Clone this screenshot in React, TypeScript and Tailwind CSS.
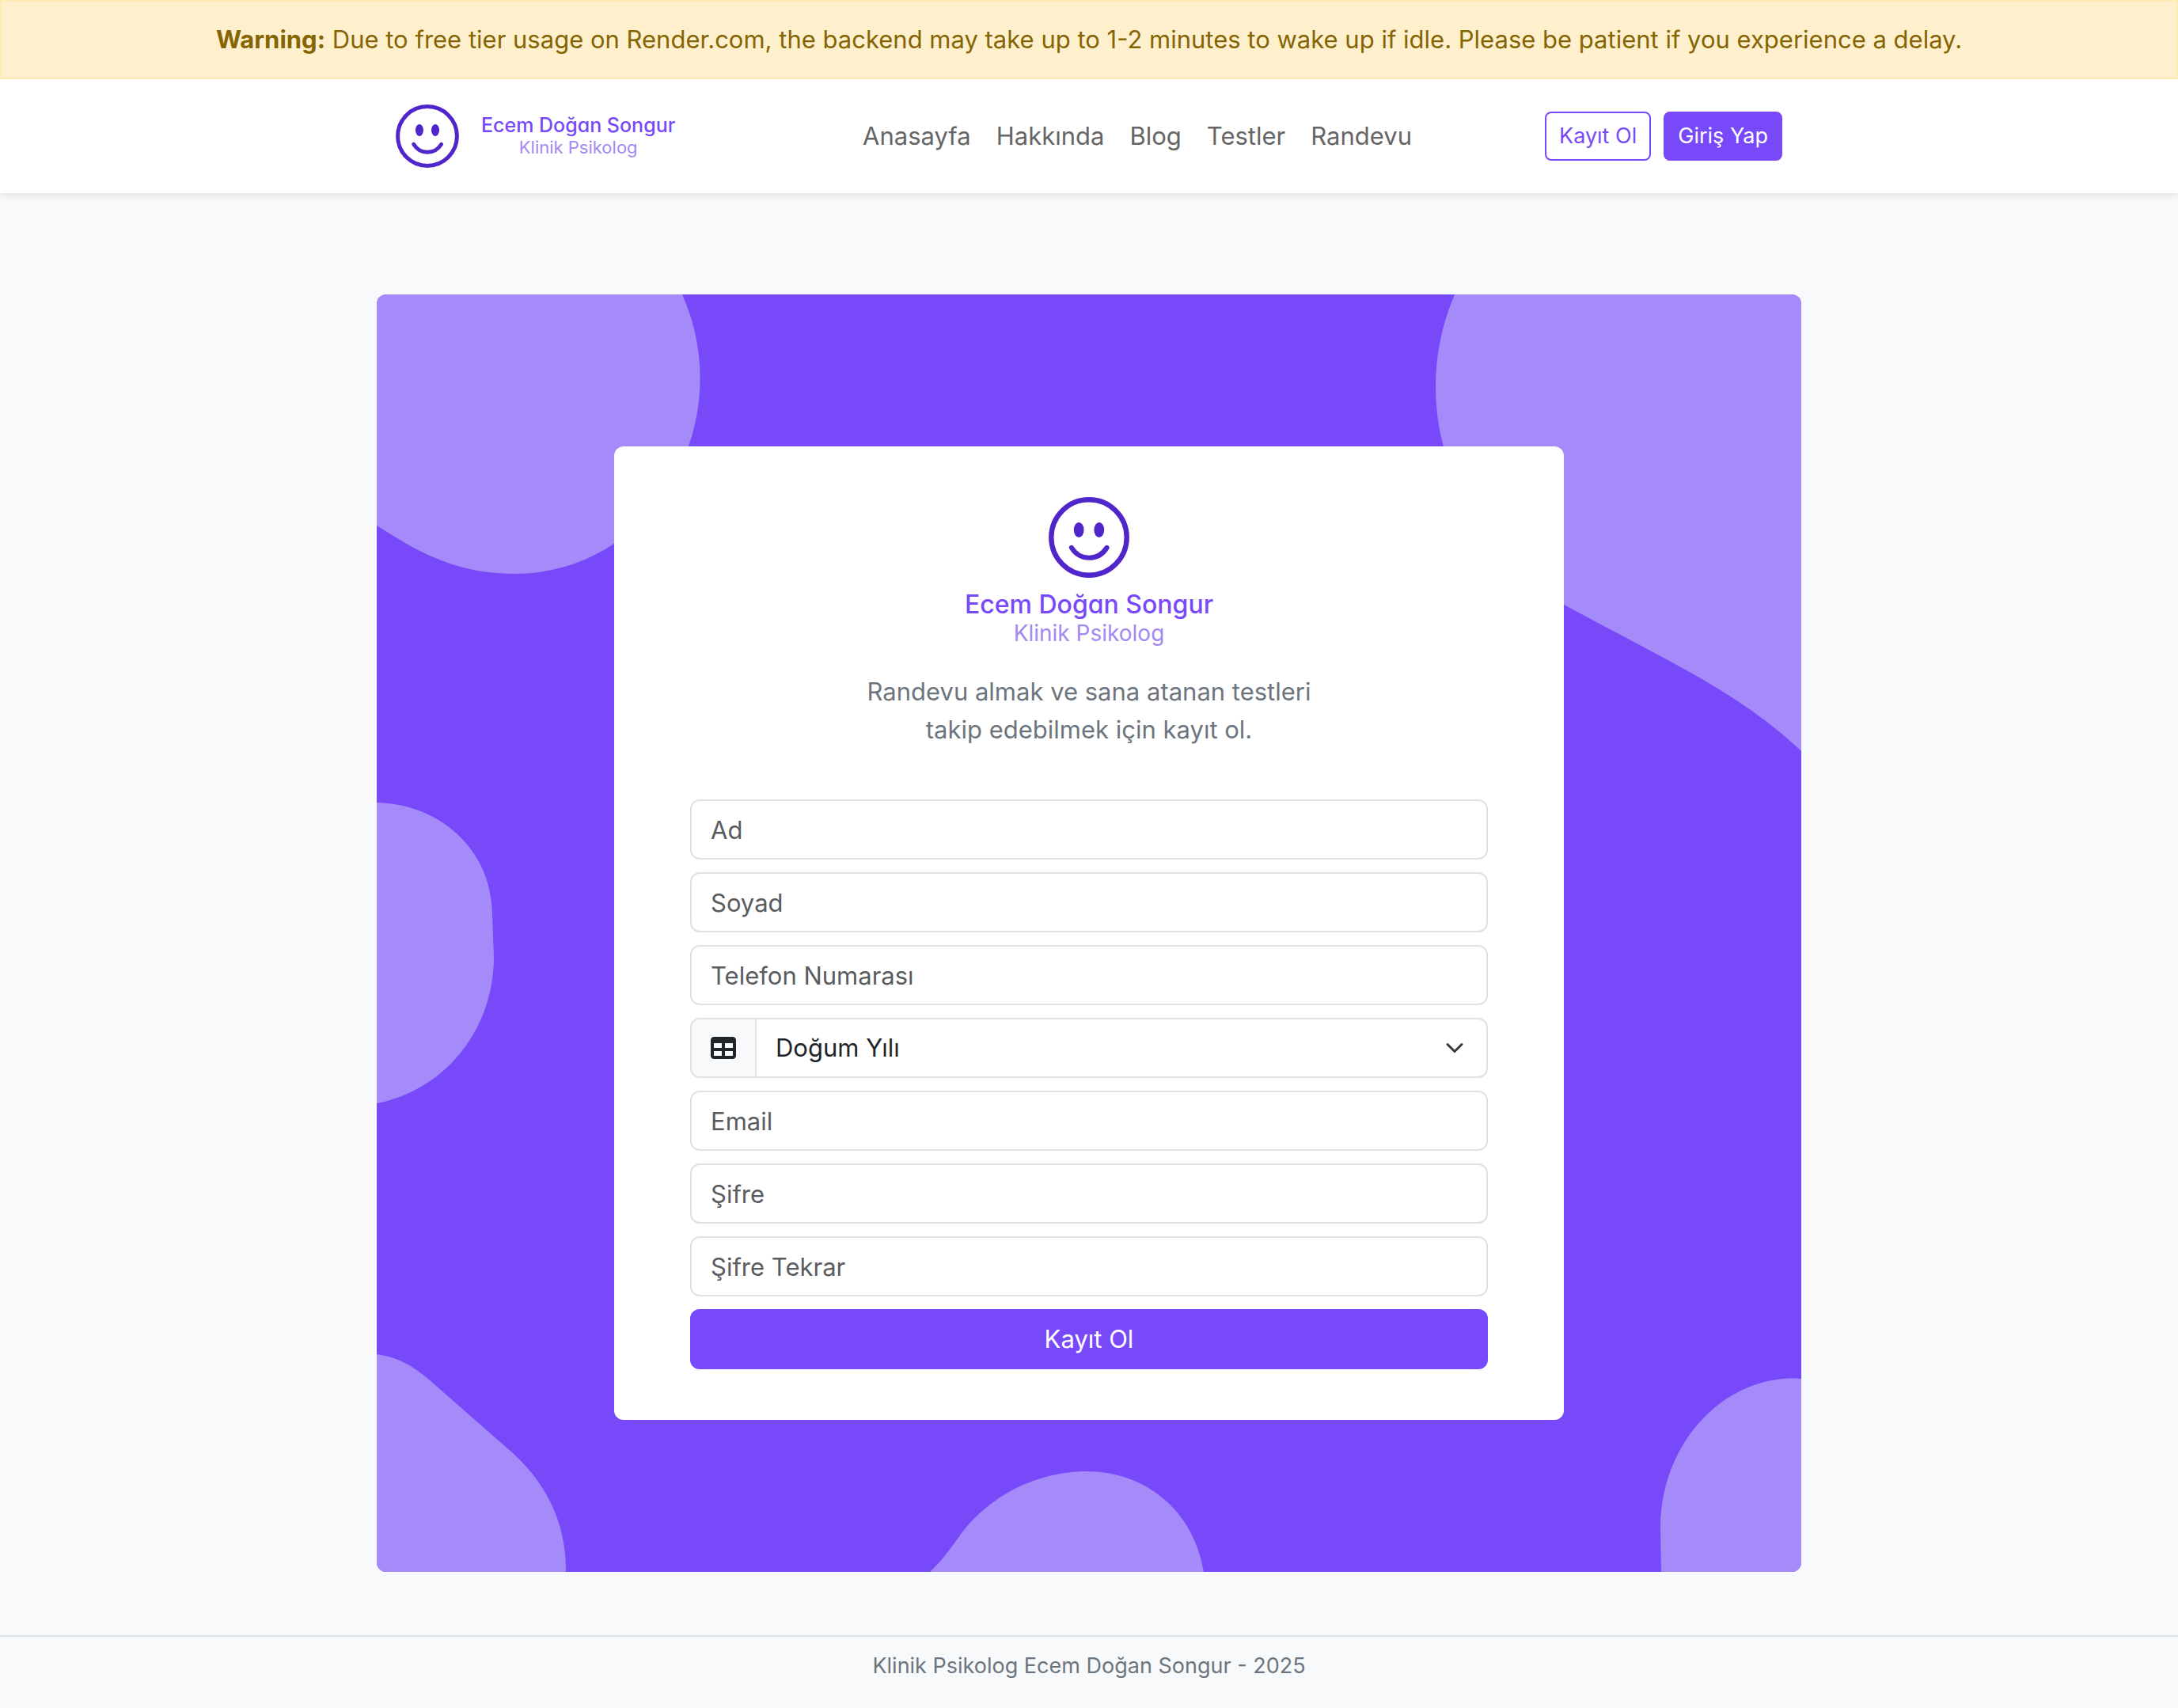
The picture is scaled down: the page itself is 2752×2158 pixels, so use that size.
import type { ReactNode } from "react";

const NAV_LINKS = ["Anasayfa", "Hakkında", "Blog", "Testler", "Randevu"];

const YEARS = Array.from({ length: 80 }, (_, i) => 2007 - i);

function Smiley({ className }: { className: string }) {
  return (
    <svg viewBox="0 0 102 102" fill="none" className={className} aria-hidden="true">
      <circle cx="51" cy="51" r="47.7" stroke="#5026ca" strokeWidth="6.4" />
      <ellipse cx="38.2" cy="41.5" rx="6.4" ry="9.6" fill="#5026ca" />
      <ellipse cx="63.8" cy="41.5" rx="6.4" ry="9.6" fill="#5026ca" />
      <path d="M29 64C39 81 63 81 73.5 64" stroke="#5026ca" strokeWidth="6.2" strokeLinecap="round" />
    </svg>
  );
}

function Blobs() {
  return (
    <svg
      viewBox="0 0 1800 1614"
      preserveAspectRatio="none"
      className="absolute inset-0 size-full"
      fill="#a58afa"
      aria-hidden="true"
    >
      <path d="M0 0H386A233 247 0 0 1 176 353C139 353 104 347 67 330C45 320 22 306 0 292Z" />
      <path d="M1800 0H1362C1346 38 1338 76 1338 115C1338 142 1341 168 1348 192L1500 392L1637 465C1700 499 1755 534 1800 577Z" />
      <path d="M0 642C82 644 146 704 146 784L148 837C148 927 88 1005 0 1022Z" />
      <path d="M0 1339C28 1343 46 1354 66 1371L164 1457C212 1497 240 1550 239 1614H0Z" />
      <path d="M699 1614C712 1602 720 1591 734 1572C770 1519 834 1487 897 1487C970 1487 1032 1535 1045 1614Z" />
      <path d="M1800 1370C1792 1369 1785 1369 1777 1370C1690 1378 1622 1460 1622 1558L1623 1614H1800Z" />
    </svg>
  );
}

function Field({ id, label, type = "text" }: { id: string; label: string; type?: string }) {
  return (
    <input
      id={id}
      type={type}
      aria-label={label}
      placeholder={label}
      className="block h-[76px] w-full rounded-xl border-2 border-[#dee2e6] bg-white px-6 text-[31px] text-[#212529] placeholder:text-[#595c5f]"
    />
  );
}

function YearSelect() {
  return (
    <div className="relative flex h-[76px] overflow-hidden rounded-xl border-2 border-[#dee2e6] bg-white">
      <label
        htmlFor="year"
        className="flex shrink-0 items-center border-r-2 border-[#dee2e6] bg-[#f8f9fb] px-6"
      >
        <svg viewBox="0 0 512 512" className="size-8" fill="#212529" aria-hidden="true">
          <path d="M64 256V160H224v96H64zm0 64H224v96H64V320zm224 96V320H448v96H288zM448 256H288V160H448v96zM64 32C28.700 32 0 60.700 0 96V416c0 35.300 28.700 64 64 64H448c35.300 0 64-28.700 64-64V96c0-35.300-28.700-64-64-64H64z" />
        </svg>
      </label>
      <select
        id="year"
        aria-label="Doğum Yılı"
        defaultValue=""
        className="min-w-0 flex-1 appearance-none bg-transparent px-6 text-[31px] text-[#212529]"
      >
        <option value="">Doğum Yılı</option>
        {YEARS.map((year) => (
          <option key={year}>{year}</option>
        ))}
      </select>
      <svg
        viewBox="0 0 16 16"
        fill="none"
        className="pointer-events-none absolute top-6 right-7 size-6"
        aria-hidden="true"
      >
        <path
          d="m2 5 6 6 6-6"
          stroke="#343a40"
          strokeWidth="2"
          strokeLinecap="round"
          strokeLinejoin="round"
        />
      </svg>
    </div>
  );
}

function NavLink({ children }: { children: ReactNode }) {
  return (
    <a href="#" className="text-[31px] leading-[48px] text-[#656565]">
      {children}
    </a>
  );
}

export default function App() {
  return (
    <div className="flex min-h-screen flex-col bg-[#f8f9fb] font-['Inter',sans-serif]">
      <div
        role="alert"
        className="border-2 border-[#ffecb5] bg-[#fff0cd] px-8 py-6 text-center text-[31px] leading-[48px] text-[#856404]"
      >
        <strong>Warning:</strong> Due to free tier usage on Render.com, the backend may take up to
        1-2 minutes to wake up if idle. Please be patient if you experience a delay.
      </div>

      <header className="relative bg-white shadow-[0_4px_8px_rgba(0,0,0,0.075)]">
        <div className="mx-auto flex max-w-[1800px] items-center justify-between px-6 py-8">
          <a href="#" className="flex min-w-[422px] items-center gap-7">
            <Smiley className="size-20" />
            <span className="flex flex-col text-center [font-feature-settings:'cv11']">
              <span className="text-[25px] leading-7 font-medium text-[#7749f8]">
                Ecem Doğan Songur
              </span>
              <span className="text-[22px] leading-7 text-[#a389f0]">Klinik Psikolog</span>
            </span>
          </a>
          <nav className="flex gap-8 px-4">
            {NAV_LINKS.map((link) => (
              <NavLink key={link}>{link}</NavLink>
            ))}
          </nav>
          <div className="flex gap-4">
            <a
              href="#"
              className="rounded-lg border-2 border-[#7749f8] px-4 py-2 text-[27px] leading-[42px] text-[#7749f8]"
            >
              Kayıt Ol
            </a>
            <a
              href="#"
              className="rounded-lg border-2 border-[#7749f8] bg-[#7749f8] px-4 py-2 text-[27px] leading-[42px] text-white"
            >
              Giriş Yap
            </a>
          </div>
        </div>
      </header>

      <main className="flex-1 pt-32 pb-20">
        <div className="relative mx-auto max-w-[1800px] overflow-hidden rounded-xl bg-[#7749f8] px-6 py-48">
          <Blobs />
          <section className="relative mx-auto max-w-[1200px] rounded-xl bg-white px-24 py-16">
            <Smiley className="mx-auto size-[102px]" />
            <h1 className="mt-4 flex flex-col text-center [font-feature-settings:'cv11']">
              <span className="text-[32px] leading-9 font-medium text-[#7749f8]">
                Ecem Doğan Songur
              </span>
              <span className="text-[28px] leading-9 text-[#a389f0]">Klinik Psikolog</span>
            </h1>
            <p className="mt-8 text-center text-[31px] leading-[48px] text-[#6c757d]">
              Randevu almak ve sana atanan testleri
              <br />
              takip edebilmek için kayıt ol.
            </p>
            <form className="mt-16 flex flex-col gap-4" onSubmit={(e) => e.preventDefault()}>
              <Field id="name" label="Ad" />
              <Field id="surname" label="Soyad" />
              <Field id="phone" label="Telefon Numarası" type="tel" />
              <YearSelect />
              <Field id="email" label="Email" type="email" />
              <Field id="password" label="Şifre" type="password" />
              <Field id="password-repeat" label="Şifre Tekrar" type="password" />
              <button type="submit" className="h-[76px] rounded-xl bg-[#7749f8] text-[31px] text-white">
                Kayıt Ol
              </button>
            </form>
          </section>
        </div>
      </main>

      <footer className="border-t-2 border-[#dee2e6] pt-4 pb-8 text-center text-[27px] leading-[42px] text-[#6c757d]">
        Klinik Psikolog Ecem Doğan Songur - 2025
      </footer>
    </div>
  );
}
